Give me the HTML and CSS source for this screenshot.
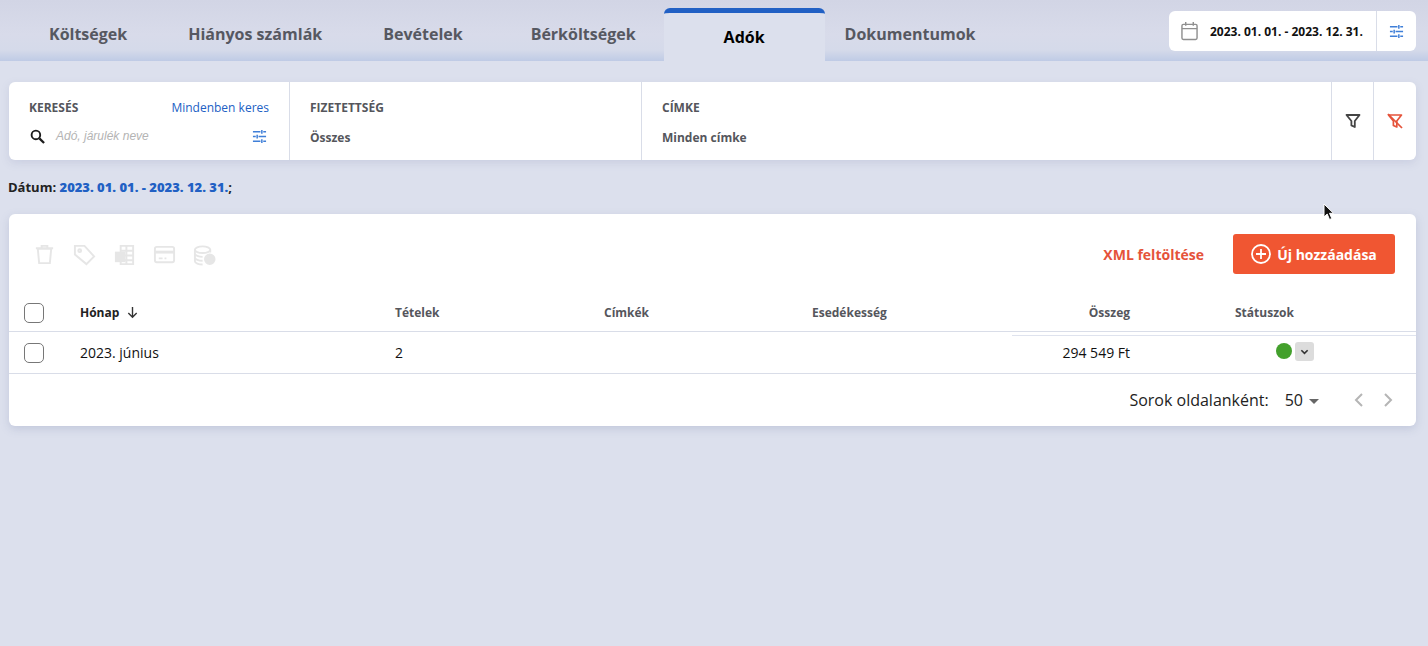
FILE: index.html
```html
<!DOCTYPE html>
<html lang="hu">
<head>
  <meta charset="UTF-8" />
  <meta name="viewport" content="width=device-width, initial-scale=1" />
  <title>Adók</title>
  <link rel="stylesheet" href="styles.css">
</head>
<body>
  <header class="topbar">
    <nav class="tabs">
      <a class="tab tab-koltseg">Költségek</a>
      <a class="tab tab-hianyos">Hiányos számlák</a>
      <a class="tab tab-bevetel">Bevételek</a>
      <a class="tab tab-ber">Bérköltségek</a>
      <a class="tab tab-active">Adók</a>
      <a class="tab tab-dok">Dokumentumok</a>
    </nav>
    <div class="datebox">
      <span class="datebox-main">
        <svg class="icon-cal" viewBox="0 0 18 20" fill="none" stroke="#8f8f8f" stroke-width="1.5">
          <rect x="1" y="3" width="16" height="16" rx="1.5"></rect>
          <path d="M1 7.5h16M5 .5v4M13 .5v4"></path>
        </svg>
        2023. 01. 01. - 2023. 12. 31.
      </span>
      <span class="datebox-btn">
        <svg class="icon-tune" viewBox="0 0 16 16" fill="none" stroke="#3f7fd8" stroke-width="1.6">
          <path d="M1 3h8M12 3h3M10.5 1v4M1 8h3M7 8h8M5.5 6v4M1 13h8M12 13h3M10.5 11v4"></path>
        </svg>
      </span>
    </div>
  </header>

  <section class="filters">
    <div class="filter filter-search">
      <div class="filter-head">
        <span class="filter-label">KERESÉS</span>
        <a class="filter-link">Mindenben keres</a>
      </div>
      <div class="search-row">
        <svg class="icon-search" viewBox="0 0 16 16" fill="none" stroke="#1c1c1c">
          <circle cx="6.3" cy="6.3" r="4.6" stroke-width="2"></circle>
          <path d="M10 10l5 5" stroke-width="2.4"></path>
        </svg>
        <span class="search-placeholder">Adó, járulék neve</span>
        <svg class="icon-tune" viewBox="0 0 16 16" fill="none" stroke="#3f7fd8" stroke-width="1.6">
          <path d="M1 3h8M12 3h3M10.5 1v4M1 8h3M7 8h8M5.5 6v4M1 13h8M12 13h3M10.5 11v4"></path>
        </svg>
      </div>
    </div>
    <div class="filter filter-paid">
      <span class="filter-label">FIZETETTSÉG</span>
      <span class="filter-value">Összes</span>
    </div>
    <div class="filter filter-tag">
      <span class="filter-label">CÍMKE</span>
      <span class="filter-value">Minden címke</span>
    </div>
    <div class="filter-btn">
      <svg class="icon-filter" viewBox="0 0 16 16" fill="none" stroke="#444" stroke-width="1.8" stroke-linejoin="round">
        <path d="M1.5 2h13L9.8 8v6l-3.4-1.6V8z"></path>
      </svg>
    </div>
    <div class="filter-btn">
      <svg class="icon-filter" viewBox="0 0 16 16" fill="none" stroke="#e5533a" stroke-width="1.7" stroke-linejoin="round">
        <path d="M1.5 2h13L9.8 8v6l-3.4-1.6V8z"></path>
        <path d="M1 1l14 14"></path>
      </svg>
    </div>
  </section>

  <p class="date-line">Dátum: <b>2023. 01. 01. - 2023. 12. 31.</b>;</p>

  <section class="card">
    <div class="toolbar">
      <div class="toolbar-icons">
        <svg viewBox="0 0 24 24" fill="none" stroke="#e6e6e6" stroke-width="2"><path d="M5 6h14l-1.4 15H6.400zM3 5.500h18M9 5V3h6v2"></path></svg>
        <svg viewBox="0 0 24 24" fill="none" stroke="#e6e6e6" stroke-width="2"><path d="M2 3h10l10 11-8 8L2 12z"></path><circle cx="7" cy="8" r="1.500"></circle></svg>
        <svg viewBox="0 0 24 24" fill="none" stroke="#e6e6e6" stroke-width="2"><path d="M8 3h13v19H8zM8 8h13M8 13h13M8 18h13M14 3v19"></path><rect x="3" y="10" width="9" height="9" fill="#e6e6e6"></rect></svg>
        <svg viewBox="0 0 24 24" fill="none" stroke="#e6e6e6" stroke-width="2"><rect x="2" y="4" width="20" height="16" rx="2"></rect><path d="M2 9.500h20" stroke-width="3"></path><path d="M6 16h4M12 16h2"></path></svg>
        <svg viewBox="0 0 24 24" fill="none" stroke="#e6e6e6" stroke-width="2"><ellipse cx="10" cy="7" rx="8" ry="3.500"></ellipse><path d="M2 7v12c0 2 4 3.500 8 3.500M2 11c0 2 4 3.500 8 3.500M2 15c0 2 4 3.500 8 3.500M18 7v3"></path><circle cx="17.500" cy="17" r="5" fill="#e6e6e6"></circle></svg>
      </div>
      <a class="xml-link">XML feltöltése</a>
      <button class="add-btn">
        <svg viewBox="0 0 20 20" fill="none" stroke="#fff" stroke-width="1.800">
          <circle cx="10" cy="10" r="9"></circle>
          <path d="M10 5v10M5 10h10"></path>
        </svg>
        Új hozzáadása
      </button>
    </div>

    <div class="row row-head">
      <span class="check"></span>
      <span class="cell-month">Hónap
        <svg class="icon-sort" viewBox="0 0 14 14" fill="none" stroke="#333" stroke-width="1.500"><path d="M7 1v11M2.500 7.500L7 12l4.500-4.500"></path></svg>
      </span>
      <span>Tételek</span>
      <span>Címkék</span>
      <span>Esedékesség</span>
      <span class="cell-sum">Összeg</span>
      <span class="cell-status">Státuszok</span>
      <span></span>
    </div>
    <div class="row-accent"></div>
    <div class="row row-data">
      <span class="check"></span>
      <span class="cell-month">2023. június</span>
      <span>2</span>
      <span></span>
      <span></span>
      <span class="cell-sum">294 549 Ft</span>
      <span class="cell-status"><i class="dot"></i></span>
      <span class="expand">
        <svg viewBox="0 0 10 6" fill="none" stroke="#333" stroke-width="1.800"><path d="M1.500 1L5 4.500 8.500 1"></path></svg>
      </span>
    </div>

    <div class="pager">
      <span class="pager-label">Sorok oldalanként:</span>
      <span class="pager-size">50</span>
      <i class="caret"></i>
      <span class="pager-arrows">
        <svg viewBox="0 0 10 16" fill="none" stroke="#b5b5b5" stroke-width="2"><path d="M8 2L2 8l6 6"></path></svg>
        <svg viewBox="0 0 10 16" fill="none" stroke="#b5b5b5" stroke-width="2"><path d="M2 2l6 6-6 6"></path></svg>
      </span>
    </div>
  </section>

  <svg class="cursor" viewBox="0 0 12 18">
    <path d="M1 1v13l3.200-3 2.300 5.500 2.300-1-2.300-5.200H10.500z" fill="#111" stroke="#fff" stroke-width="1"></path>
  </svg>
</body>
</html>
```

FILE: styles.css
```css
* {
  box-sizing: border-box;
}

html, body {
  height: 646px;
  overflow: hidden;
}

body {
  position: relative;
  margin: 0;
  background: #dce0ed;
  color: #111;
  font-family: "Open Sans", sans-serif;
  font-size: 14px;
}

svg {
  display: block;
  flex: none;
}

/* top bar */
.topbar {
  display: flex;
  justify-content: space-between;
  height: 61px;
  padding-right: 12px;
  background: linear-gradient(#d2d5e5 0, #d8dbea 35px, #d5daea 50px, #bfcbe5 61px);
}

.tabs {
  display: flex;
  padding: 8px 0 0 49px;
}

.tab {
  display: flex;
  align-items: center;
  height: 53px;
  padding-bottom: 1px;
  color: #565861;
  font-size: 16px;
  font-weight: 700;
  white-space: nowrap;
}

.tab-hianyos,
.tab-bevetel {
  margin-left: 61px;
}

.tab-ber {
  margin-left: 68px;
}

.tab-active {
  justify-content: center;
  width: 161px;
  margin-left: 28px;
  background: #dce0ed;
  border-top: 5px solid #2160c4;
  border-radius: 6px 6px 0 0;
  color: #000;
  padding-bottom: 0;
  padding-top: 0;
}

.tab-dok {
  margin-left: 20px;
}

.datebox {
  display: flex;
  align-self: flex-start;
  height: 40px;
  margin-top: 11px;
  background: #fff;
  border-radius: 6px;
  font-size: 12px;
  font-weight: 700;
}

.datebox-main {
  display: flex;
  align-items: center;
  gap: 12px;
  width: 207px;
  padding-left: 12px;
  color: #111;
  white-space: nowrap;
}

.datebox-btn {
  display: flex;
  align-items: center;
  justify-content: center;
  width: 40px;
  border-left: 1px solid #d9dde8;
}

.icon-cal {
  width: 17px;
  height: 20px;
}

.icon-tune {
  width: 15px;
  height: 15px;
}

/* filters */
.filters {
  display: flex;
  height: 78px;
  margin: 21px 12px 0 9px;
  background: #fff;
  border-radius: 6px;
  box-shadow: 0 3px 8px rgba(120, 130, 170, 0.18);
}

.filter {
  display: flex;
  flex-direction: column;
  padding: 18px 20px 0;
  border-right: 1px solid #d9dde8;
}

.filter-search {
  width: 281px;
}

.filter-paid {
  width: 352px;
}

.filter-tag {
  width: 690px;
}

.filter-label {
  color: #55565c;
  font-size: 12px;
  font-weight: 700;
  line-height: 16px;
}

.filter-value {
  margin-top: 14px;
  color: #55565c;
  font-size: 12px;
  font-weight: 700;
  line-height: 16px;
}

.filter-head {
  display: flex;
  justify-content: space-between;
}

.filter-link {
  color: #2160c4;
  font-size: 12px;
  line-height: 16px;
}

.search-row {
  display: flex;
  align-items: center;
  height: 20px;
  margin-top: 10px;
  padding: 0 2px 0 1px;
}

.icon-search {
  width: 15px;
  height: 15px;
}

.search-placeholder {
  flex: 1;
  margin-left: 11px;
  color: #b4b4b4;
  font-family: "Liberation Sans", sans-serif;
  font-size: 12px;
  font-style: italic;
}

.filter-btn {
  display: flex;
  align-items: center;
  justify-content: center;
  width: 42px;
  border-right: 1px solid #d9dde8;
}

.filter-btn:last-child {
  border-right: 0;
  flex: 1;
}

.icon-filter {
  width: 16px;
  height: 16px;
}

.date-line {
  margin: 18px 0 0 8px;
  color: #222;
  font-size: 13px;
  font-weight: 700;
  line-height: 18px;
}

.date-line b {
  color: #2160c4;
}

/* table card */
.card {
  height: 212px;
  margin: 18px 12px 0 9px;
  background: #fff;
  border-radius: 6px;
  box-shadow: 0 3px 8px rgba(120, 130, 170, 0.25);
}

.toolbar {
  display: flex;
  align-items: center;
  height: 80px;
  padding: 0 21px 0 24px;
}

.toolbar-icons {
  display: flex;
  flex: 1;
  gap: 17px;
}

.toolbar-icons svg {
  width: 23px;
  height: 23px;
}

.xml-link {
  margin-right: 29px;
  color: #e5533a;
  font-weight: 700;
}

.add-btn {
  display: flex;
  align-items: center;
  justify-content: center;
  gap: 6px;
  width: 162px;
  height: 40px;
  background: #f05632;
  border: 0;
  border-radius: 3px;
  color: #fff;
  font-family: inherit;
  font-size: 14px;
  font-weight: 700;
}

.add-btn svg {
  width: 20px;
  height: 20px;
}

.row {
  display: grid;
  grid-template-columns: 56px 315px 209px 208px 170px 148px 153px 1fr;
  align-items: center;
}

.row-head {
  height: 38px;
  padding: 0 0 0 15px;
  border-bottom: 1px solid #d9dde8;
  color: #55565c;
  font-size: 12px;
  font-weight: 700;
}

.row-accent {
  height: 1px;
  margin: 3px 0 -4px 1003px;
  background: #dfe3ee;
}

.row-data {
  height: 42px;
  padding: 0 0 0 15px;
  border-bottom: 1px solid #d9dde8;
  color: #111;
  font-size: 14px;
}

.check {
  width: 20px;
  height: 20px;
  border: 1px solid #777;
  border-radius: 5px;
}

.cell-month {
  display: flex;
  align-items: center;
  gap: 7px;
}

.row-head .cell-month {
  color: #222;
}

.icon-sort {
  width: 13px;
  height: 13px;
}

.cell-sum {
  text-align: right;
}

.cell-status {
  padding-left: 105px;
}

.row-data .cell-status {
  padding-left: 146px;
}

.dot {
  display: block;
  width: 16px;
  height: 16px;
  margin-bottom: 3px;
  background: #43a02c;
  border-radius: 50%;
}

.expand {
  display: flex;
  align-items: center;
  justify-content: center;
  width: 19px;
  height: 19px;
  margin: 0 0 2px 12px;
  background: #dcdcdc;
  border-radius: 3px;
}

.expand svg {
  width: 9px;
  height: 6px;
}

.pager {
  display: flex;
  align-items: center;
  justify-content: flex-end;
  height: 52px;
  padding-right: 23px;
  color: #222;
  font-size: 16px;
}

.pager-size {
  margin-left: 16px;
}

.caret {
  margin: 3px 0 0 6px;
  border-top: 5px solid #666;
  border-left: 5px solid transparent;
  border-right: 5px solid transparent;
}

.pager-arrows {
  display: flex;
  gap: 19px;
  margin-left: 35px;
}

.pager-arrows svg {
  width: 10px;
  height: 16px;
}

/* mouse pointer captured in the shot */
.cursor {
  position: absolute;
  left: 1323px;
  top: 203px;
  width: 12px;
  height: 18px;
}
```
